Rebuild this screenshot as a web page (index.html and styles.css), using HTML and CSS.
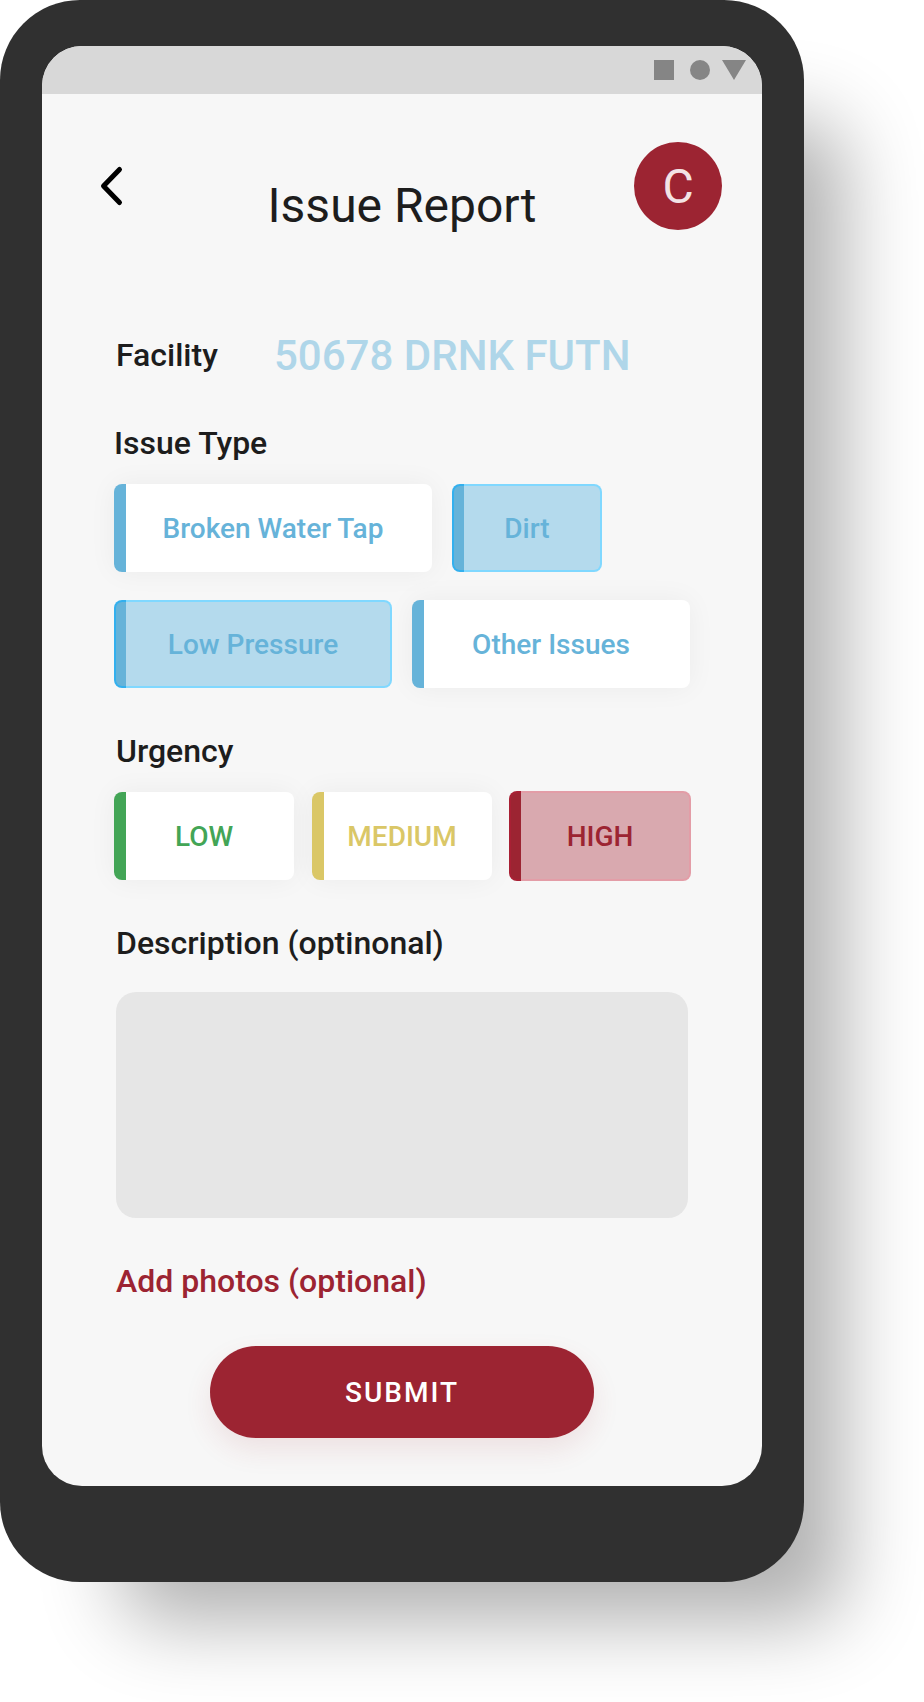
FILE: index.html
```html
<!DOCTYPE html>
<html lang="en">
<head>
<meta charset="utf-8">
<meta name="viewport" content="width=device-width, initial-scale=1">
<title>Issue Report</title>
<link rel="stylesheet" href="styles.css">
</head>
<body>
<div class="phone">
  <div class="screen">
    <div class="status-bar">
      <svg width="92" height="20" viewBox="0 0 92 20" fill="#858585" aria-hidden="true">
        <rect width="20" height="20"/>
        <circle cx="46" cy="10" r="10"/>
        <path d="M68 0h24L80 20z"/>
      </svg>
    </div>
    <header class="header">
      <button class="back" type="button" aria-label="Back">
        <svg width="28" height="44" viewBox="0 0 28 44" fill="none" stroke="#000" stroke-width="5" stroke-linecap="round" stroke-linejoin="round" aria-hidden="true">
          <path d="M21.500 5.500L5.500 22l16 16.500"/>
        </svg>
      </button>
      <h1 class="title">Issue Report</h1>
      <button class="avatar" type="button">C</button>
    </header>
    <form class="form">
      <div class="facility">
        <span class="label">Facility</span>
        <span class="facility-id">50678 DRNK FUTN</span>
      </div>

      <fieldset class="group">
        <legend class="label label-flush">Issue Type</legend>
        <div class="row">
          <label class="chip chip-wide"><input type="checkbox" name="issue">Broken Water Tap</label>
          <label class="chip chip-short"><input type="checkbox" name="issue" checked>Dirt</label>
        </div>
        <div class="row row-even">
          <label class="chip"><input type="checkbox" name="issue" checked>Low Pressure</label>
          <label class="chip"><input type="checkbox" name="issue">Other Issues</label>
        </div>
      </fieldset>

      <fieldset class="group">
        <legend class="label">Urgency</legend>
        <div class="urgency">
          <label class="chip chip-low"><input type="radio" name="urgency">LOW</label>
          <label class="chip chip-medium"><input type="radio" name="urgency">MEDIUM</label>
          <label class="chip chip-high"><input type="radio" name="urgency" checked>HIGH</label>
        </div>
      </fieldset>

      <div class="group">
        <label class="label" for="description">Description (optinonal)</label>
        <textarea class="description" id="description"></textarea>
      </div>

      <a class="label photos" href="#photos">Add photos (optional)</a>
      <button class="submit" type="submit">SUBMIT</button>
    </form>
  </div>
</div>
</body>
</html>
```
FILE: styles.css
```css
* {
  box-sizing: border-box;
}

body {
  margin: 0;
  padding: 0 120px 120px 0;
  background: #fff;
  color: #1d1d1d;
  font-family: Roboto, "Liberation Sans", sans-serif;
  overflow-x: hidden;
}

button,
textarea {
  font: inherit;
  border: 0;
}

button {
  padding: 0;
  cursor: pointer;
}

.phone {
  padding: 46px 42px 96px;
  border-radius: 80px;
  background: #303030;
  box-shadow: 80px 80px 80px -40px rgba(0, 0, 0, 0.31);
}

.screen {
  border-radius: 40px;
  background: #f7f7f7;
  overflow: hidden;
}

.status-bar {
  display: flex;
  justify-content: flex-end;
  padding: 14px 16px;
  background: #d8d8d8;
}

.header {
  display: grid;
  grid-template-columns: 88px 1fr 88px;
  align-items: start;
  padding: 48px 40px 0;
}

.back {
  display: flex;
  align-items: center;
  height: 88px;
  padding-left: 16px;
  background: none;
}

.title {
  margin: 36px 0 0;
  font-size: 48px;
  line-height: 56px;
  font-weight: 400;
  text-align: center;
}

.avatar {
  width: 88px;
  height: 88px;
  padding-top: 2px;
  border-radius: 50%;
  background: #9c2432;
  color: #f3e3e5;
  font-size: 48px;
  line-height: 56px;
}

.form {
  display: flex;
  flex-direction: column;
  gap: 44px;
  padding: 98px 72px 48px;
}

.label {
  display: block;
  padding: 0 2px 2px;
  font-size: 32px;
  line-height: 38px;
  font-weight: 500;
}

.label-flush {
  padding: 0 0 2px;
}

.facility {
  display: grid;
  grid-template-columns: 160px 1fr;
  align-items: center;
}

.facility-id {
  color: #afd6e9;
  font-size: 42px;
  line-height: 48px;
  font-weight: 500;
}

.group {
  min-width: 0;
  margin: 0;
  padding: 0;
  border: 0;
}

.row {
  display: flex;
  gap: 20px;
  margin-top: 20px;
}

.row + .row {
  margin-top: 28px;
}

.row-even .chip {
  flex: 1;
}

.urgency {
  display: grid;
  grid-template-columns: repeat(3, 1fr);
  gap: 18px;
  margin-top: 20px;
}

.chip {
  --accent: #66b3d9;
  --edge: #33b0ee;
  --tint: #b4daed;
  --line: #80d8ff;
  position: relative;
  display: flex;
  align-items: center;
  justify-content: center;
  height: 88px;
  padding-top: 2px;
  border: 2px solid transparent;
  border-radius: 8px;
  background: linear-gradient(90deg, var(--accent) 12px, #fff 12px) border-box;
  box-shadow: 0 0 28px rgba(0, 0, 0, 0.05);
  color: var(--accent);
  font-size: 28px;
  line-height: 32px;
  font-weight: 500;
  cursor: pointer;
}

.chip:has(input:checked) {
  background:
    linear-gradient(90deg, var(--accent) 10px, var(--tint) 10px) padding-box,
    linear-gradient(90deg, var(--edge) 12px, var(--line) 12px) border-box;
  box-shadow: none;
}

.chip input {
  position: absolute;
  inset: 0;
  margin: 0;
  appearance: none;
  cursor: pointer;
}

.chip-wide {
  width: 318px;
}

.chip-short {
  width: 150px;
}

.chip-low {
  --accent: #43a556;
}

.chip-medium {
  --accent: #dac767;
}

.chip-high {
  --accent: #9c2432;
  --edge: #a82034;
  --tint: #d9a9af;
  --line: #e39da7;
}

.chip-high:has(input:checked) {
  height: 90px;
  margin: -1px;
}

.description {
  display: block;
  width: calc(100% - 4px);
  height: 226px;
  margin: 28px 2px 0;
  padding: 20px;
  border-radius: 20px;
  background: #e6e6e6;
  font-size: 28px;
  resize: none;
}

.photos {
  align-self: flex-start;
  color: #9c2432;
  text-decoration: none;
}

.submit {
  align-self: center;
  width: 384px;
  max-width: 100%;
  height: 92px;
  border-radius: 46px;
  background: #9c2432;
  box-shadow: 0 12px 28px rgba(156, 36, 50, 0.1);
  color: #fff;
  font-size: 28px;
  font-weight: 500;
  letter-spacing: 2px;
}
```
